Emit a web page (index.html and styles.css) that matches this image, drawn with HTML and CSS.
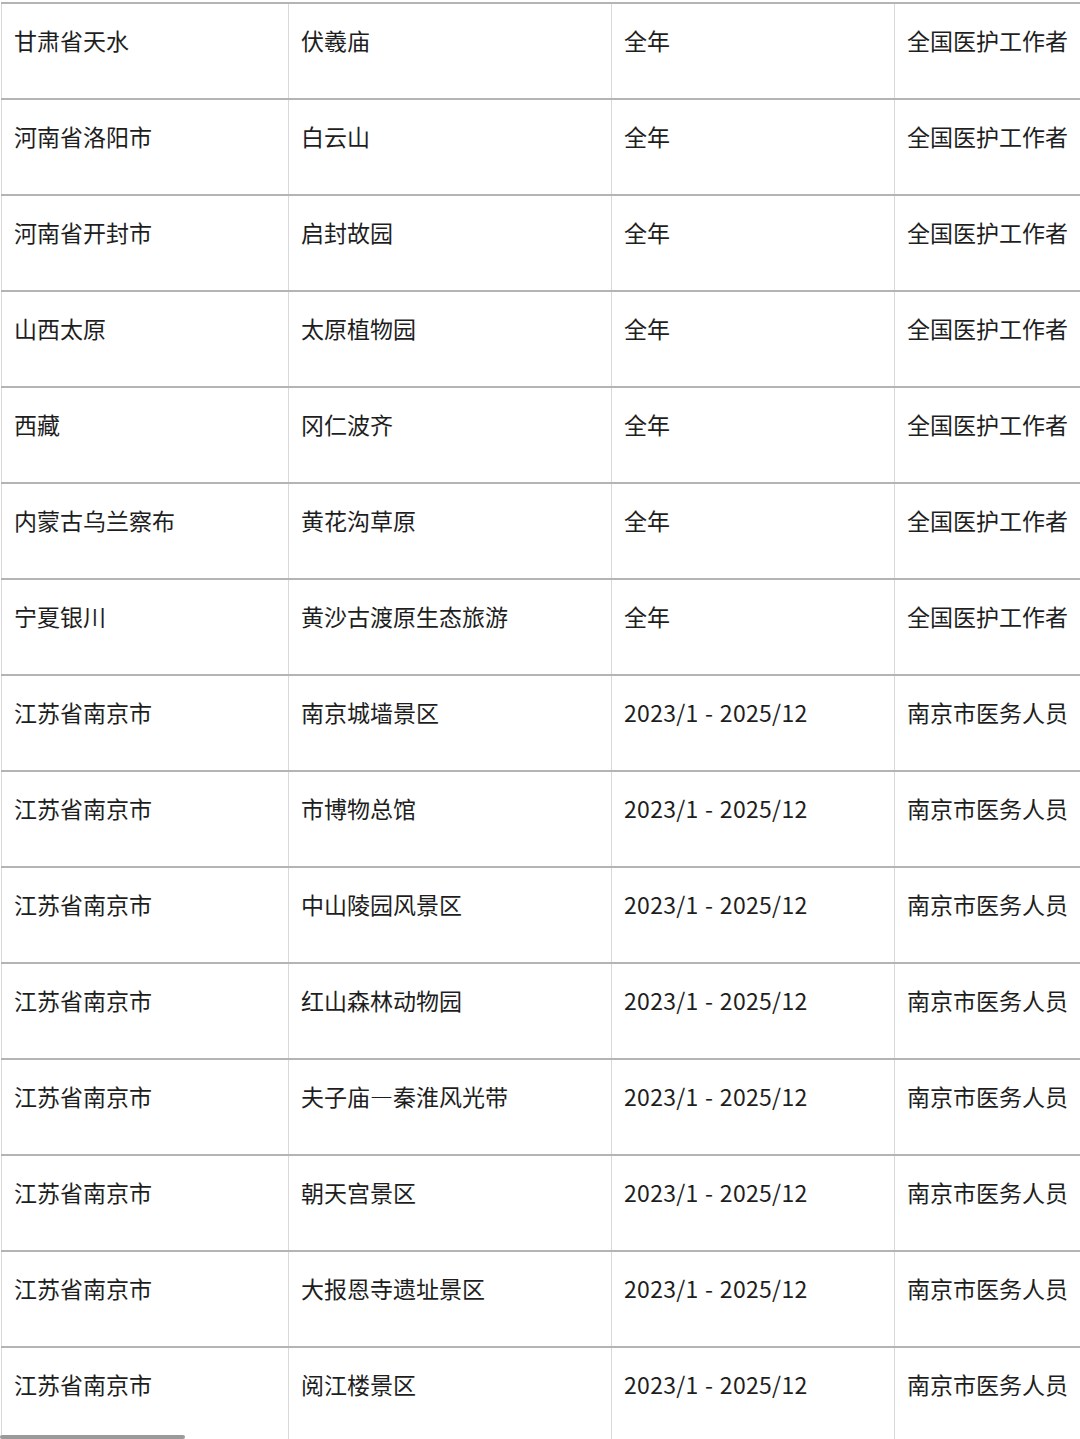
FILE: index.html
```html
<!DOCTYPE html>
<html lang="zh">
<head>
<meta charset="utf-8">
<link rel="stylesheet" href="styles.css">
</head>
<body>
<div class="viewport">
  <table class="grid">
    <colgroup>
      <col class="c1"><col class="c2"><col class="c3"><col class="c4">
    </colgroup>
    <tbody>
      <tr><td>甘肃省天水</td><td>伏羲庙</td><td>全年</td><td>全国医护工作者</td></tr>
      <tr><td>河南省洛阳市</td><td>白云山</td><td>全年</td><td>全国医护工作者</td></tr>
      <tr><td>河南省开封市</td><td>启封故园</td><td>全年</td><td>全国医护工作者</td></tr>
      <tr><td>山西太原</td><td>太原植物园</td><td>全年</td><td>全国医护工作者</td></tr>
      <tr><td>西藏</td><td>冈仁波齐</td><td>全年</td><td>全国医护工作者</td></tr>
      <tr><td>内蒙古乌兰察布</td><td>黄花沟草原</td><td>全年</td><td>全国医护工作者</td></tr>
      <tr><td>宁夏银川</td><td>黄沙古渡原生态旅游</td><td>全年</td><td>全国医护工作者</td></tr>
      <tr><td>江苏省南京市</td><td>南京城墙景区</td><td class="num">2023/1 - 2025/12</td><td>南京市医务人员</td></tr>
      <tr><td>江苏省南京市</td><td>市博物总馆</td><td class="num">2023/1 - 2025/12</td><td>南京市医务人员</td></tr>
      <tr><td>江苏省南京市</td><td>中山陵园风景区</td><td class="num">2023/1 - 2025/12</td><td>南京市医务人员</td></tr>
      <tr><td>江苏省南京市</td><td>红山森林动物园</td><td class="num">2023/1 - 2025/12</td><td>南京市医务人员</td></tr>
      <tr><td>江苏省南京市</td><td>夫子庙—秦淮风光带</td><td class="num">2023/1 - 2025/12</td><td>南京市医务人员</td></tr>
      <tr><td>江苏省南京市</td><td>朝天宫景区</td><td class="num">2023/1 - 2025/12</td><td>南京市医务人员</td></tr>
      <tr><td>江苏省南京市</td><td>大报恩寺遗址景区</td><td class="num">2023/1 - 2025/12</td><td>南京市医务人员</td></tr>
      <tr><td>江苏省南京市</td><td>阅江楼景区</td><td class="num">2023/1 - 2025/12</td><td>南京市医务人员</td></tr>
    </tbody>
  </table>
  <div class="scroll-thumb"></div>
</div>
</body>
</html>
```
FILE: styles.css
```css
html, body {
  margin: 0;
  padding: 0;
  background: #ffffff;
  overflow: hidden;
}
.viewport {
  position: relative;
  width: 1080px;
  height: 1439px;
  overflow: hidden;
  padding-top: 2px;
  box-sizing: border-box;
  padding-left: 1px;
}
.grid {
  border-collapse: collapse;
  table-layout: fixed;
  width: 1200px;
  font-family: "Noto Sans CJK SC", "Noto Sans", sans-serif;
  font-size: 23px;
  color: #1e1e1e;
}
.c1 { width: 287px; }
.c2 { width: 323px; }
.c3 { width: 283px; }
.c4 { width: 307px; }
.grid td {
  height: 94px;
  box-sizing: border-box;
  padding: 21px 12px 43px 12px;
  line-height: 30px;
  vertical-align: top;
  white-space: nowrap;
  border-top: 2px solid #b4b4b4;
  border-bottom: 2px solid #b4b4b4;
  border-left: 1px solid #d9d9d9;
  border-right: 1px solid #d9d9d9;
}
.grid td.num {
  letter-spacing: 0.3px;
  word-spacing: 1px;
}
.scroll-thumb {
  position: absolute;
  left: 0;
  bottom: 0;
  width: 185px;
  height: 4px;
  border-radius: 2px;
  background: #9a9a9a;
}
```
